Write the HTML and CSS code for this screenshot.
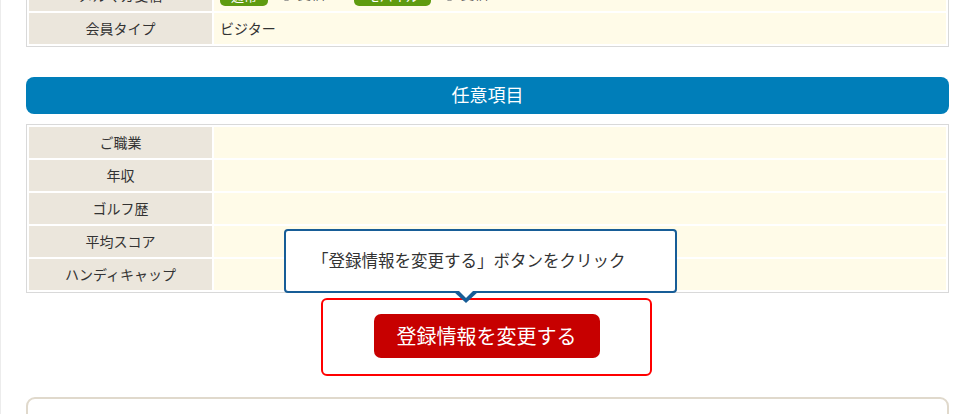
FILE: index.html
```html
<!DOCTYPE html>
<html lang="ja">
<head>
    <meta charset="UTF-8">
    <meta name="viewport" content="width=device-width, initial-scale=1.0">
    <title>会員情報変更</title>
    <link rel="stylesheet" href="styles.css">
</head>
<body>
    <div class="page">
        <table class="info-table first-table">
            <tr>
                <th>メルマガ受信</th>
                <td>
                    <span class="badge">通常</span>
                    <span class="radio"></span>受信
                    <span class="badge badge-wide">モバイル</span>
                    <span class="radio"></span>受信
                </td>
            </tr>
            <tr>
                <th>会員タイプ</th>
                <td>ビジター</td>
            </tr>
        </table>

        <h2 class="section-title">任意項目</h2>

        <table class="info-table">
            <tr><th>ご職業</th><td></td></tr>
            <tr><th>年収</th><td></td></tr>
            <tr><th>ゴルフ歴</th><td></td></tr>
            <tr><th>平均スコア</th><td></td></tr>
            <tr><th>ハンディキャップ</th><td></td></tr>
        </table>

        <div class="submit-area">
            <div class="callout">「登録情報を変更する」ボタンをクリック</div>
            <div class="guide-frame">
                <button class="submit-btn" type="button">登録情報を変更する</button>
            </div>
        </div>

        <div class="next-box"></div>
    </div>
</body>
</html>
```

FILE: styles.css
```css
* {
    margin: 0;
    padding: 0;
    box-sizing: border-box;
}

body {
    font-family: 'Noto Sans CJK JP', 'Noto Sans', sans-serif;
    background-color: #ffffff;
    color: #333333;
    box-shadow: inset 1px 0 0 #ececec;
    min-height: 100vh;
    overflow: hidden;
}

.page {
    width: 923px;
    margin-left: 26px;
}

.info-table {
    width: 100%;
    border: 1px solid #d9d9d9;
    border-spacing: 2px;
    font-size: 14px;
}

.first-table {
    margin-top: -23px;
}

.info-table th,
.info-table td {
    height: 31px;
    padding-bottom: 2px;
}

.info-table th {
    width: 183px;
    background-color: #ebe6dc;
    font-weight: normal;
    text-align: center;
    color: #333333;
}

.info-table td {
    padding-left: 6px;
    padding-right: 6px;
    background-color: #fffbe8;
}

.badge {
    display: inline-block;
    width: 48px;
    height: 20px;
    line-height: 20px;
    margin-right: 10px;
    border-radius: 5px;
    background-color: #5f9b10;
    color: #ffffff;
    font-size: 13px;
    text-align: center;
    vertical-align: middle;
}

.badge-wide {
    width: 77px;
    margin-left: 26px;
}

.radio {
    display: inline-block;
    width: 11px;
    height: 11px;
    margin-right: 5px;
    border: 1px solid #888888;
    border-radius: 50%;
    vertical-align: middle;
}

.section-title {
    margin: 30px 0 10px;
    height: 37px;
    line-height: 35px;
    border-radius: 8px;
    background-color: #007eb9;
    color: #ffffff;
    font-size: 18px;
    font-weight: normal;
    text-align: center;
}

.submit-area {
    position: relative;
    display: flex;
    justify-content: center;
    padding-top: 5px;
}

.guide-frame {
    width: 331px;
    height: 78px;
    margin-right: 2px;
    padding-top: 14px;
    border: 2px solid #ff0000;
    border-radius: 6px;
    display: flex;
    justify-content: center;
}

.submit-btn {
    width: 226px;
    height: 44px;
    padding-bottom: 2px;
    border: none;
    border-radius: 7px;
    background-color: #c70000;
    color: #ffffff;
    font-family: inherit;
    font-size: 20px;
    cursor: pointer;
}

.callout {
    position: absolute;
    top: -64px;
    left: 258px;
    z-index: 2;
    width: 393px;
    height: 64px;
    padding-left: 26px;
    border: 2px solid #175d97;
    border-radius: 4px;
    background-color: #ffffff;
    font-size: 16.5px;
    line-height: 58px;
    color: #333333;
}

.callout::before,
.callout::after {
    content: "";
    position: absolute;
    left: 167px;
    border-style: solid;
    border-color: transparent;
}

.callout::before {
    top: 100%;
    border-width: 12px 13px 0;
    border-top-color: #175d97;
}

.callout::after {
    top: calc(100% - 3px);
    left: 170px;
    border-width: 10px 10px 0;
    border-top-color: #ffffff;
}

.next-box {
    height: 120px;
    margin-top: 21px;
    border: 2px solid #e0d9cc;
    border-radius: 9px;
}
```
